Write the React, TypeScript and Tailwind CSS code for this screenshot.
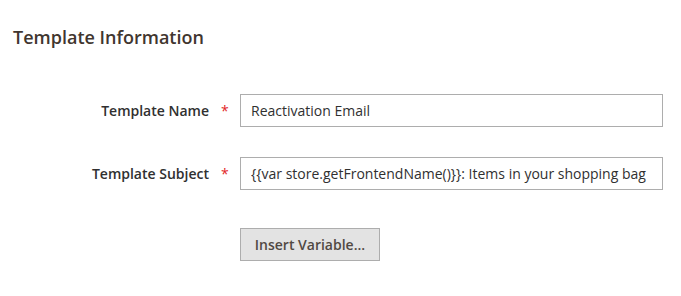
const Field = ({ label, value }: { label: string; value: string }) => (
	<div className="flex items-center">
		<label className="w-[209px] shrink-0 text-right text-[14px] font-semibold text-[#303030]">{label}</label>
		<span className="w-[31px] shrink-0 pl-[12px] text-[14px] text-[#e22626]">*</span>
		<input
			readOnly
			value={value}
			className="h-[33px] w-[423px] border border-[#adadad] bg-white px-[10px] text-[14px] text-[#303030] outline-none"
		/>
	</div>
)

const App = () => {
	return (
		<div className="h-[296px] w-[681px] bg-white font-['Open_Sans',sans-serif]">
			<h2 className="px-[13px] pt-[24px] text-[18px] leading-[26px] font-semibold text-[#41362f]">Template Information</h2>
			<div className="mt-[44px] flex flex-col gap-[30px]">
				<Field label="Template Name" value="Reactivation Email" />
				<Field label="Template Subject" value="{{var store.getFrontendName()}}: Items in your shopping bag" />
				<div className="mt-[8px] pl-[240px]">
					<button
						type="button"
						className="h-[33px] w-[140px] border border-[#adadad] bg-[#e3e3e3] text-[14px] font-semibold text-[#514943]"
					>
						Insert Variable...
					</button>
				</div>
			</div>
		</div>
	)
}

export default App
